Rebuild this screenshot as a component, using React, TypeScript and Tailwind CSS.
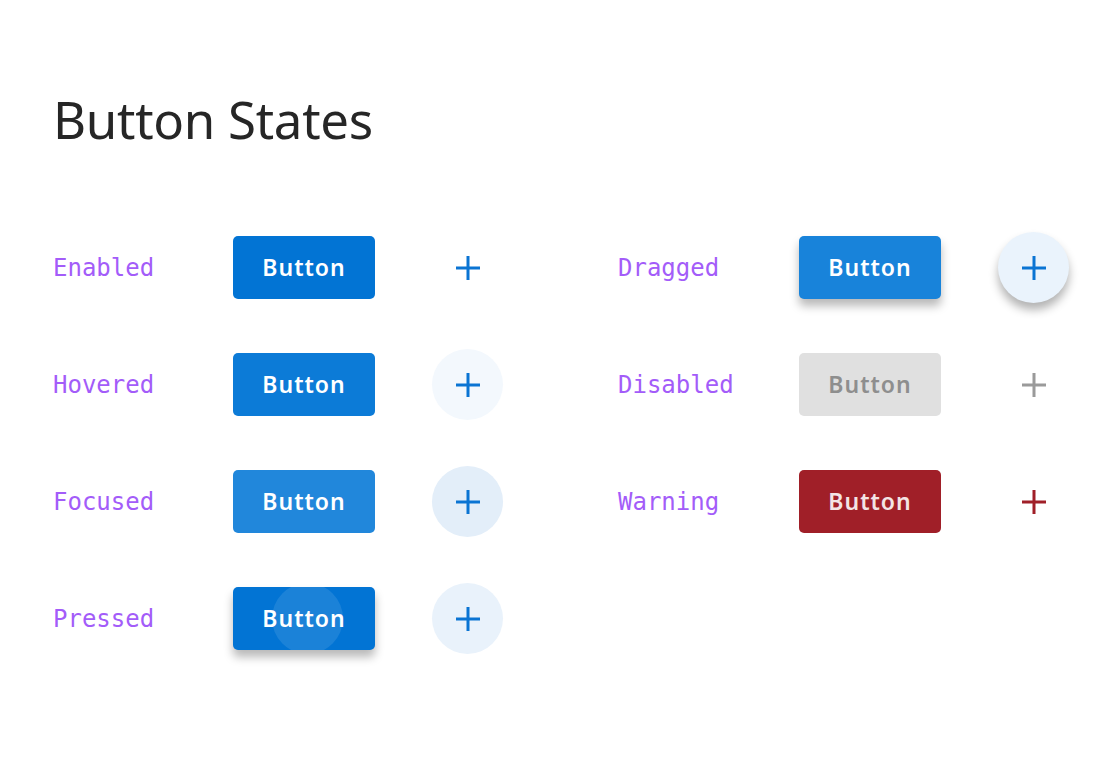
import type { ReactNode } from "react";

type Tone = "blue" | "gray" | "red";

type StateRow = {
  label: string;
  buttonClassName: string;
  iconClassName: string;
  tone: Tone;
  ripple?: boolean;
};

const labelClassName =
  "shrink-0 font-['DejaVu_Sans_Mono',monospace] text-[24px] leading-none text-[#a35cf9]";

const buttonBase =
  "relative flex h-[63px] w-[142px] shrink-0 items-center justify-center overflow-hidden rounded-[5px] font-['Noto_Sans',sans-serif] text-[23px] font-semibold tracking-[1px]";

const iconBase = "ml-[57px] flex h-[71px] w-[71px] shrink-0 items-center justify-center rounded-full";

const toneColor: Record<Tone, string> = {
  blue: "#0a74d3",
  gray: "#9a9a9a",
  red: "#a01f28",
};

const leftRows: StateRow[] = [
  {
    label: "Enabled",
    buttonClassName: "bg-[#0274d4] text-white",
    iconClassName: "",
    tone: "blue",
  },
  {
    label: "Hovered",
    buttonClassName: "bg-[#0c7bd7] text-white",
    iconClassName: "bg-[#f3f8fd]",
    tone: "blue",
  },
  {
    label: "Focused",
    buttonClassName: "bg-[#2187db] text-white",
    iconClassName: "bg-[#e3eef9]",
    tone: "blue",
  },
  {
    label: "Pressed",
    buttonClassName: "bg-[#0274d4] text-white shadow-[0_7px_10px_rgba(0,0,0,0.28)]",
    iconClassName: "bg-[#e9f2fb]",
    tone: "blue",
    ripple: true,
  },
];

const rightRows: StateRow[] = [
  {
    label: "Dragged",
    buttonClassName: "bg-[#1883da] text-white shadow-[0_7px_10px_rgba(0,0,0,0.28)]",
    iconClassName: "bg-[#eaf3fc] shadow-[0_7px_10px_rgba(0,0,0,0.3)]",
    tone: "blue",
  },
  {
    label: "Disabled",
    buttonClassName: "bg-[#e0e0e0] text-[#8e8e8e]",
    iconClassName: "",
    tone: "gray",
  },
  {
    label: "Warning",
    buttonClassName: "bg-[#a01f28] text-[#f3e4e5]",
    iconClassName: "",
    tone: "red",
  },
];

function PlusIcon({ tone }: { tone: Tone }) {
  return (
    <svg width="26" height="26" viewBox="0 0 26 26" fill="none">
      <path d="M13 1v24M1 13h24" stroke={toneColor[tone]} strokeWidth="3" />
    </svg>
  );
}

function StateLine({ row, labelWidth }: { row: StateRow; labelWidth: string }) {
  return (
    <div className="flex h-[71px] items-center">
      <span className={`${labelWidth} ${labelClassName}`}>{row.label}</span>
      <div className={`${buttonBase} ${row.buttonClassName}`}>
        {row.ripple ? (
          <span className="absolute left-[39px] top-[-4px] h-[71px] w-[71px] rounded-full bg-white/10" />
        ) : null}
        <span className="relative">Button</span>
      </div>
      <div className={`${iconBase} ${row.iconClassName}`}>
        <PlusIcon tone={row.tone} />
      </div>
    </div>
  );
}

function Column({ children }: { children: ReactNode }) {
  return <div className="flex flex-col gap-[46px]">{children}</div>;
}

export default function App() {
  return (
    <div className="min-h-[775px] w-[1115px] bg-white pl-[53px] pt-[94px]">
      <h1 className="font-['Noto_Sans',sans-serif] text-[51px] font-normal leading-none tracking-[-0.3px] text-[#262626]">
        Button States
      </h1>

      <div className="mt-[87px] flex gap-[115px]">
        <Column>
          {leftRows.map((row) => (
            <StateLine key={row.label} row={row} labelWidth="w-[180px]" />
          ))}
        </Column>
        <Column>
          {rightRows.map((row) => (
            <StateLine key={row.label} row={row} labelWidth="w-[181px]" />
          ))}
        </Column>
      </div>
    </div>
  );
}
